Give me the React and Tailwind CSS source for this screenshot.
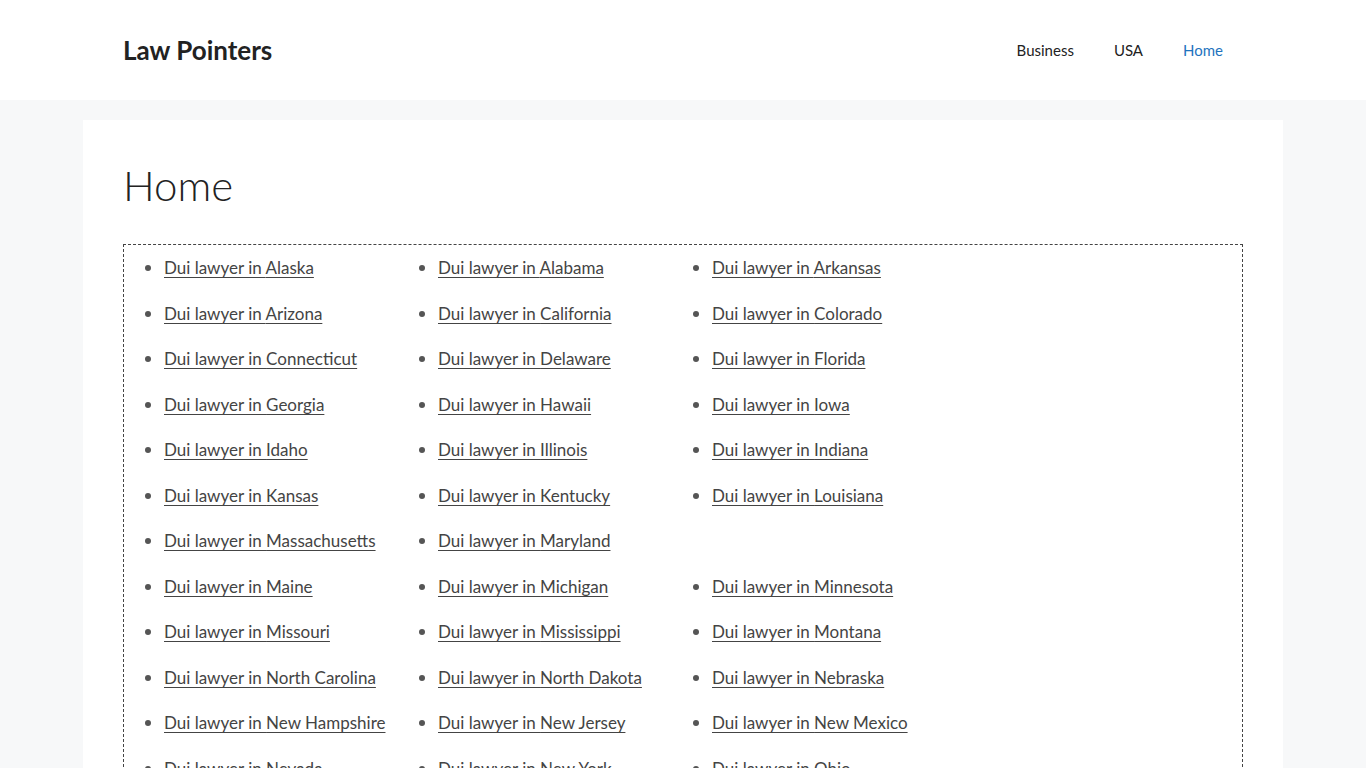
import React from "react";

const rows = [
  ["Alaska", "Alabama", "Arkansas"],
  ["Arizona", "California", "Colorado"],
  ["Connecticut", "Delaware", "Florida"],
  ["Georgia", "Hawaii", "Iowa"],
  ["Idaho", "Illinois", "Indiana"],
  ["Kansas", "Kentucky", "Louisiana"],
  ["Massachusetts", "Maryland", null],
  ["Maine", "Michigan", "Minnesota"],
  ["Missouri", "Mississippi", "Montana"],
  ["North Carolina", "North Dakota", "Nebraska"],
  ["New Hampshire", "New Jersey", "New Mexico"],
  ["Nevada", "New York", "Ohio"],
];

function Item({ s }) {
  if (!s) return <div className="h-[45.5px]" />;
  return (
    <div className="h-[45.5px] flex items-center">
      <span className="w-[6px] h-[6px] rounded-full bg-[#555] ml-[21px] mr-[13px]" />
      <a href="#" className="text-[17px] text-[#444] underline underline-offset-[3px] decoration-1 whitespace-nowrap">
        Dui lawyer in {s}
      </a>
    </div>
  );
}

export default function App() {
  return (
    <div className="min-h-screen bg-[#f7f8f9]" style={{ fontFamily: "Lato, 'Noto Sans', sans-serif" }}>
      <header className="bg-white h-[100px]">
        <div className="w-[1200px] mx-auto px-[40px] h-full flex items-center justify-between">
          <div className="text-[26px] font-bold text-[#222] leading-none">Law Pointers</div>
          <nav className="flex items-center text-[15px] text-[#222] mr-[20px]">
            <a className="px-[20px]">Business</a>
            <a className="px-[20px]">USA</a>
            <a className="pl-[20px] text-[#1e73be]">Home</a>
          </nav>
        </div>
      </header>
      <main className="w-[1200px] mx-auto mt-[20px] bg-white px-[40px] pt-[40px] pb-[40px]">
        <h1 className="text-[42px] font-light text-[#222] leading-[1.2] mb-[34px]">Home</h1>
        <div className="border border-dashed border-[#444]">
          <div className="grid grid-cols-[274px_274px_274px]">
            {rows.flat().map((s, i) => (
              <Item key={i} s={s} />
            ))}
          </div>
        </div>
      </main>
    </div>
  );
}
